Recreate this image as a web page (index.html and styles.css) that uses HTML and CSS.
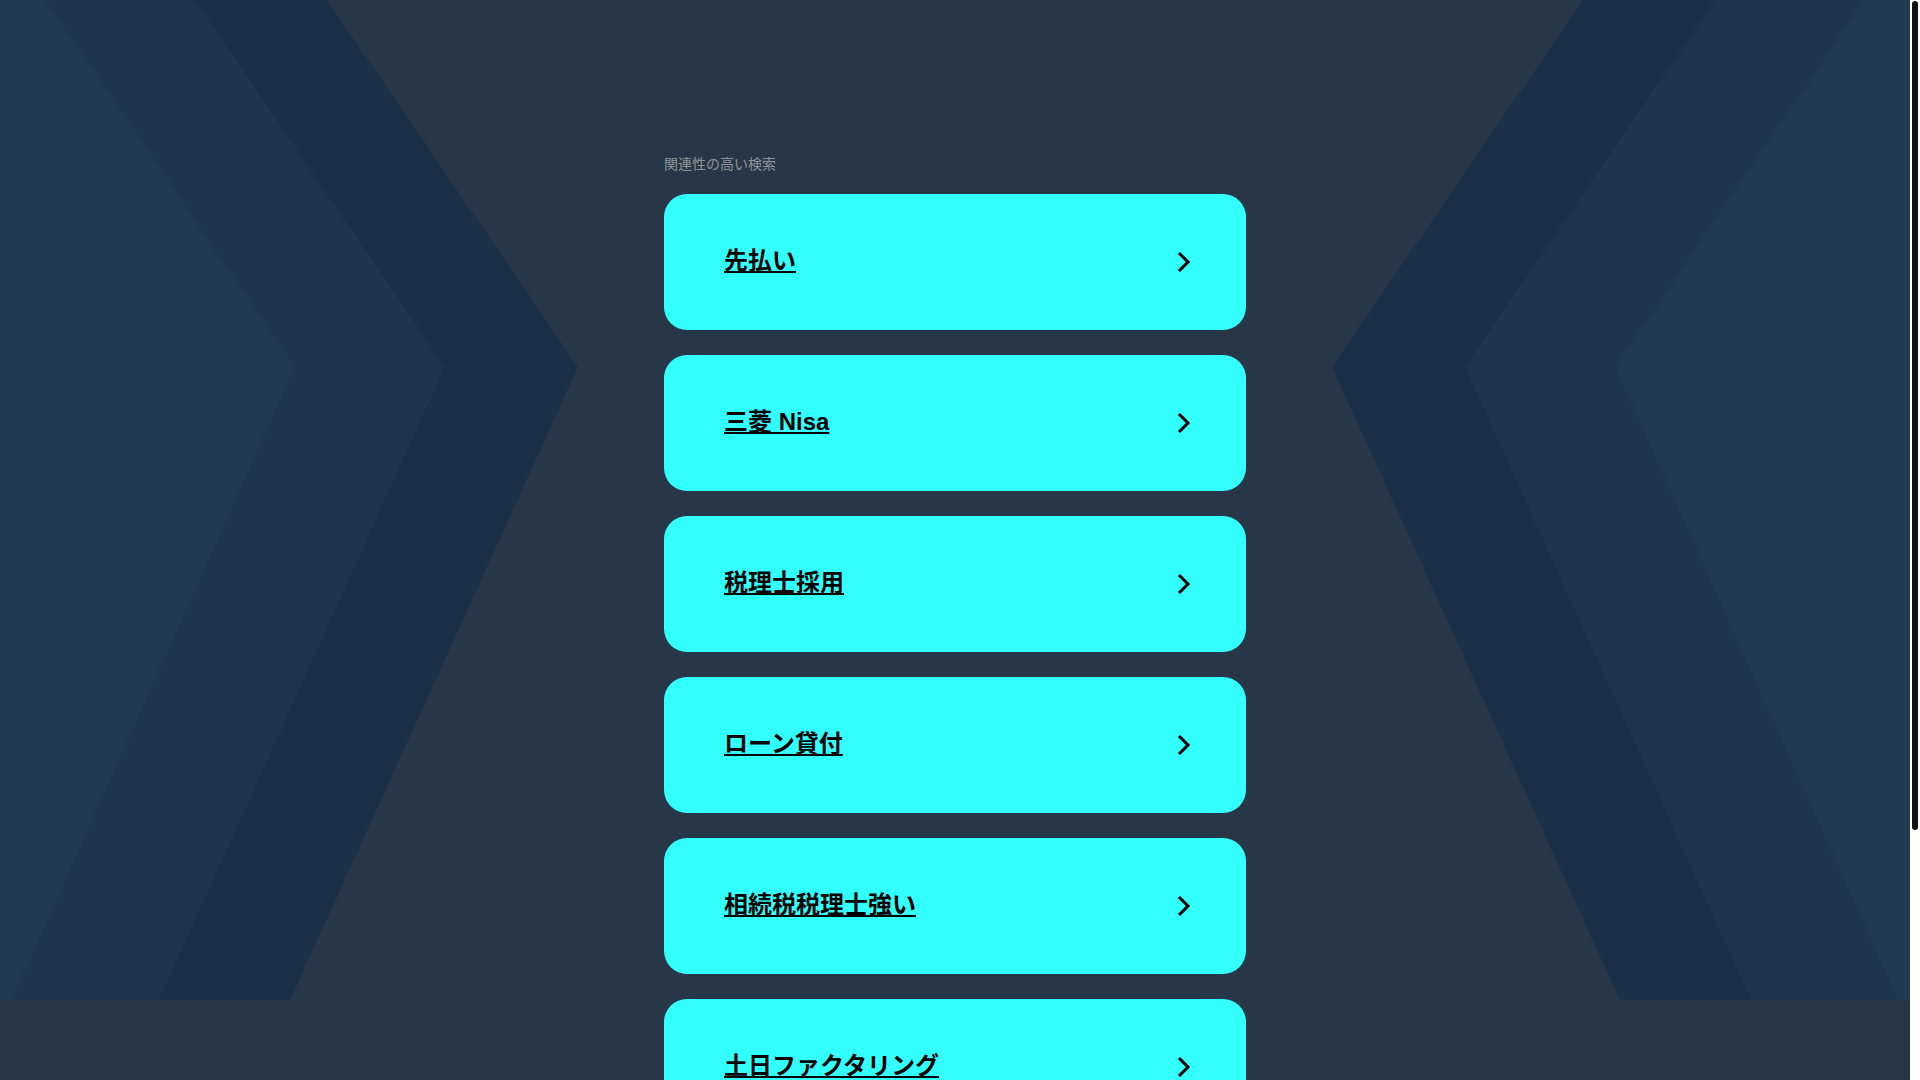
FILE: index.html
```html
<!DOCTYPE html>
<html lang="ja">
<head>
  <meta charset="UTF-8" />
  <meta name="viewport" content="width=device-width, initial-scale=1.0"/>
  <title>関連性の高い検索</title>
  <link rel="stylesheet" href="styles.css">
</head>
<body>
  <div class="page">
    <!-- 背景の山形パターン -->
    <svg class="bg" viewBox="0 0 1910 1000" preserveAspectRatio="none" aria-hidden="true">
      <g class="left">
        <polygon class="band1" points="0,0 46,0 295,367 12,1000 0,1000"/>
        <polygon class="band2" points="46,0 195,0 445,367 159,1000 12,1000 295,367"/>
        <polygon class="band3" points="195,0 327,0 578,367 290,1000 159,1000 445,367"/>
      </g>
      <g class="right" transform="translate(1910,0) scale(-1,1)">
        <polygon class="band1" points="0,0 46,0 295,367 12,1000 0,1000"/>
        <polygon class="band2" points="46,0 195,0 445,367 159,1000 12,1000 295,367"/>
        <polygon class="band3" points="195,0 327,0 578,367 290,1000 159,1000 445,367"/>
      </g>
    </svg>

    <div class="container">
      <div class="label">関連性の高い検索</div>

      <ul class="results">
        <li><a class="result" href="#"><span class="result-text">先払い</span><svg class="chevron" viewBox="0 0 16 24"><polyline points="3,3 12,12 3,21"/></svg></a></li>
        <li><a class="result" href="#"><span class="result-text">三菱 Nisa</span><svg class="chevron" viewBox="0 0 16 24"><polyline points="3,3 12,12 3,21"/></svg></a></li>
        <li><a class="result" href="#"><span class="result-text">税理士採用</span><svg class="chevron" viewBox="0 0 16 24"><polyline points="3,3 12,12 3,21"/></svg></a></li>
        <li><a class="result" href="#"><span class="result-text">ローン貸付</span><svg class="chevron" viewBox="0 0 16 24"><polyline points="3,3 12,12 3,21"/></svg></a></li>
        <li><a class="result" href="#"><span class="result-text">相続税税理士強い</span><svg class="chevron" viewBox="0 0 16 24"><polyline points="3,3 12,12 3,21"/></svg></a></li>
        <li><a class="result" href="#"><span class="result-text">土日ファクタリング</span><svg class="chevron" viewBox="0 0 16 24"><polyline points="3,3 12,12 3,21"/></svg></a></li>
      </ul>
    </div>
  </div>

  <!-- スクロールバー -->
  <div class="scrollbar"><div class="scrollbar-thumb"></div></div>
</body>
</html>
```

FILE: styles.css
```css
* {
  margin: 0;
  padding: 0;
  box-sizing: border-box;
}

html {
  background-color: #273747;
}

body {
  background-color: #273747;
  font-family: 'Liberation Sans', Arial, 'Noto Sans CJK JP', sans-serif;
}

.page {
  position: relative;
  width: calc(100% - 10px);
  min-height: 100vh;
}

.scrollbar {
  position: fixed;
  top: 0;
  right: 0;
  width: 10px;
  height: 100vh;
  background-color: #fff;
  padding: 1px 2px;
}

.scrollbar-thumb {
  height: 829px;
  background-color: #111;
  border-radius: 3px;
}

.bg {
  position: absolute;
  top: 0;
  left: 0;
  width: 100%;
  height: 1000px;
  z-index: 0;
}

.band1 { fill: #213a52; }
.band2 { fill: #1f354d; }
.band3 { fill: #1b3046; }

.container {
  position: relative;
  z-index: 1;
  width: 582px;
  margin: 0 auto;
  padding: 155px 0 270px;
}

.label {
  color: #8f959b;
  font-size: 14px;
  line-height: 18px;
  margin-bottom: 21px;
}

.results {
  list-style: none;
  display: flex;
  flex-direction: column;
  gap: 25px;
}

.result {
  display: flex;
  align-items: center;
  justify-content: space-between;
  height: 136px;
  padding: 0 54px 0 60px;
  background-color: #33ffff;
  border-radius: 23px;
  color: #000;
  text-decoration: none;
}

.result-text {
  font-size: 24px;
  font-weight: bold;
  line-height: 28px;
  margin-bottom: 2px;
  text-decoration: underline;
  text-underline-offset: 2px;
}

.chevron {
  width: 16px;
  height: 24px;
  fill: none;
  stroke: #000;
  stroke-width: 3;
}
```
